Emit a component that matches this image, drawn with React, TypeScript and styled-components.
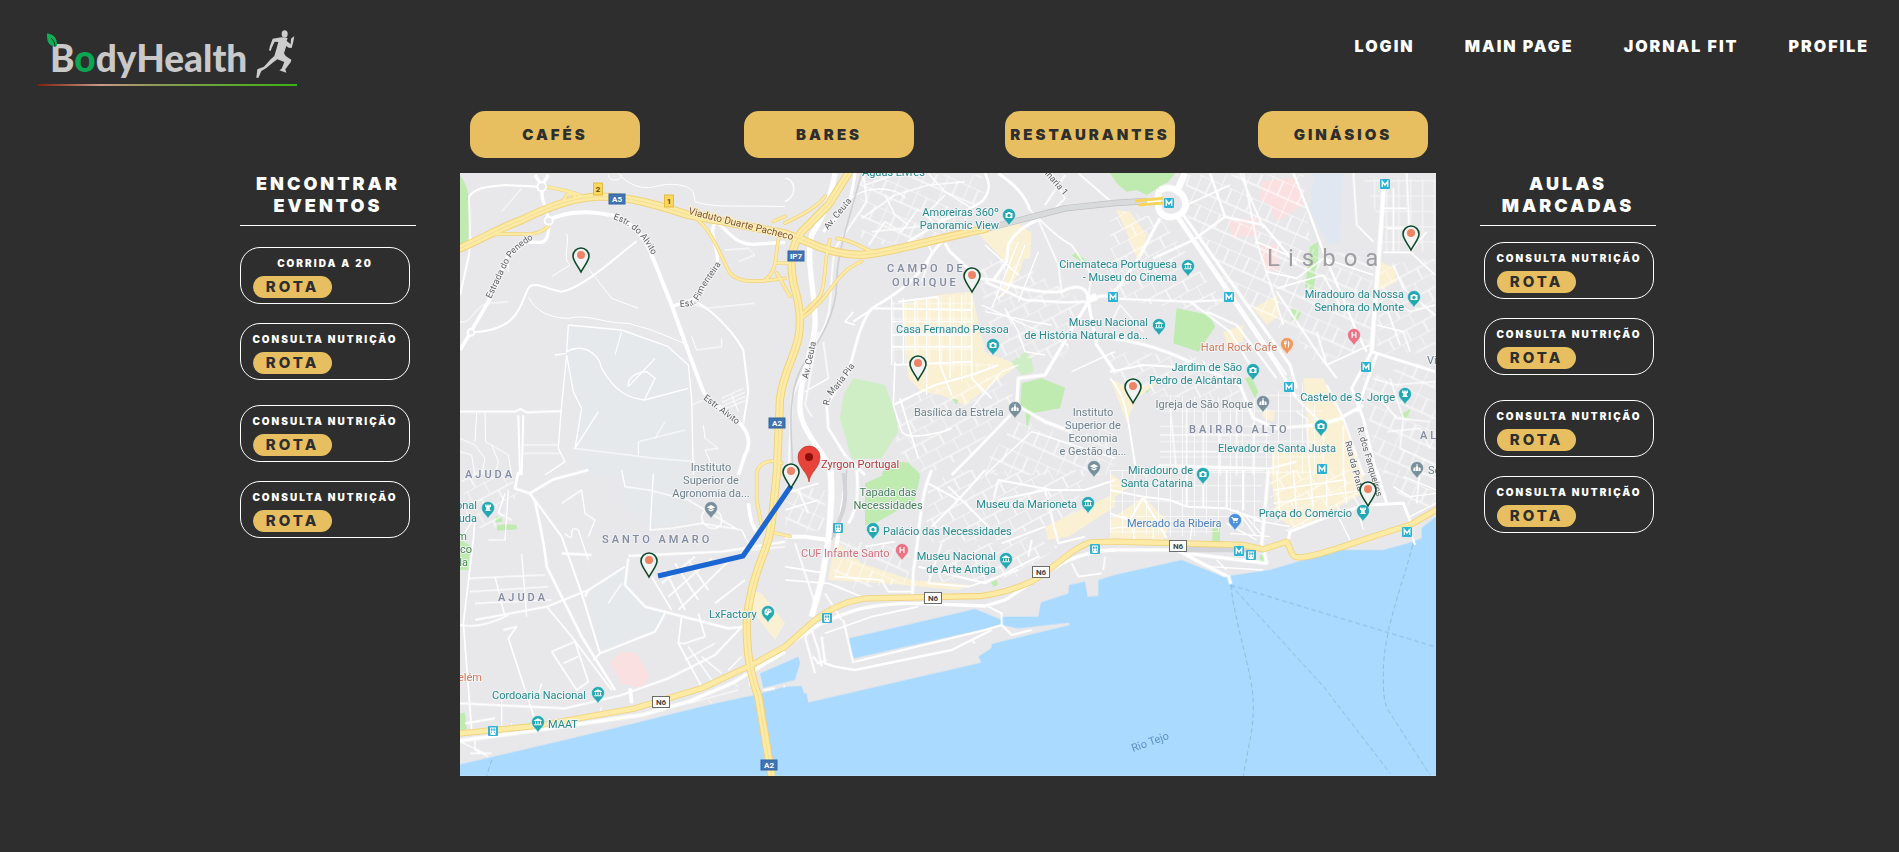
import React from "react";
import styled, { createGlobalStyle } from "styled-components";

const GlobalStyle = createGlobalStyle`
  * { box-sizing: border-box; }
  body {
    margin: 0;
    background: #2e2e2e;
    color: #fff;
    font-family: Inter, "Open Sans", sans-serif;
  }
`;

const Page = styled.div`
  padding-bottom: 48px;
`;

const Header = styled.header`
  display: flex;
  justify-content: space-between;
  align-items: flex-start;
  padding: 28px 30px 0 36px;
  height: 111px;
`;

const LogoLink = styled.a`
  display: block;
  line-height: 0;
`;

const Nav = styled.nav`
  display: flex;
  gap: 50px;
  padding-top: 8px;
`;

const NavLink = styled.a`
  color: #fff;
  font-size: 16px;
  line-height: 20px;
  font-weight: 900;
  letter-spacing: 2px;
  text-decoration: none;
  white-space: nowrap;
`;

const Main = styled.main`
  display: grid;
  grid-template-columns: 176px minmax(0, 1fr) 176px;
  column-gap: 44px;
  padding: 0 243px 0 240px;
`;

const Side = styled.aside`
  padding-top: 62px;
`;

const SideTitle = styled.h2`
  margin: 0;
  padding: 0 8px 8px;
  border-bottom: 1px solid #fff;
  font-size: 18px;
  line-height: 22px;
  font-weight: 900;
  letter-spacing: 3px;
  text-align: center;
`;

const Groups = styled.div<{ $top: number; $left: number }>`
  display: flex;
  flex-direction: column;
  gap: 25px;
  padding-top: ${(p) => p.$top}px;
  padding-left: ${(p) => p.$left}px;
`;

const Group = styled.div`
  display: flex;
  flex-direction: column;
  gap: 19px;
`;

const Card = styled.article`
  width: 170px;
  height: 57px;
  padding-top: 8px;
  border: 1px solid #fff;
  border-radius: 20px;
`;

const CardTitle = styled.h3`
  margin: 0 0 6px;
  font-size: 10px;
  line-height: 14px;
  font-weight: 900;
  letter-spacing: 2px;
  text-align: center;
  white-space: nowrap;
`;

const RouteButton = styled.button`
  display: block;
  width: 79px;
  height: 22px;
  margin-left: 12px;
  padding: 0;
  border: 0;
  border-radius: 11px;
  background: #e7bf61;
  color: #2e2e2e;
  font: 800 15px/22px Inter, sans-serif;
  letter-spacing: 3px;
  cursor: pointer;
`;

const Filters = styled.div`
  display: grid;
  grid-template-columns: 274fr 261fr 253fr 170fr;
  padding: 0 8px 0 10px;
  margin-bottom: 15px;
`;

const FilterButton = styled.button`
  width: 170px;
  height: 47px;
  padding: 0;
  border: 0;
  border-radius: 15px;
  background: #e7bf61;
  color: #2e2e2e;
  font: 900 15px/20px Inter, sans-serif;
  letter-spacing: 3px;
  cursor: pointer;
`;

const MapSvg = styled.svg`
  display: block;
  width: 100%;
  height: auto;
  font-family: Roboto, sans-serif;
`;

/* ---------- map geometry: each sheet is drawn at three units per pixel ---------- */

const sheets: Record<string, string> = {
  nw: "translate(-15 -24)",
  n: "translate(975 -24)",
  ne: "translate(1950 -24)",
  sw: "translate(-15 891)",
  s: "translate(975 891)",
  se: "translate(1950 891)",
};

type Area = [string, string, string];
const GREEN = "#bfeab0";
const PALE = "#cfeec6";
const BUFF = "#faf0d4";
const PINK = "#fbe0e2";
const MIST = "#e5e9ec";

const areas: Area[] = [
  ["nw", MIST, "M340 480L520 500L650 550L700 600V900L600 930H400L355 850L380 740L335 600Z"],
  ["sw", MIST, "M500 0H700V150L590 170L500 100ZM500 290L560 400L630 430L600 480L440 545L400 380Z"],
  ["nw", GREEN, "M15 30C30 50 42 80 42 110L40 232L15 240Z"],
  ["n", BUFF, "M575 200L680 160L740 205L735 280L660 290ZM690 215L735 230L700 330L650 400L660 340Z"],
  ["n", BUFF, "M352 420L460 390L560 380L600 560L700 600L540 720L470 690L410 680L370 640Z"],
  ["n", PALE, "M205 640L300 660L330 740L340 800L290 880L200 882L165 760L175 690Z"],
  ["n", PALE, "M680 590L720 560L740 580L745 620L710 632Z"],
  ["n", GREEN, "M710 655L770 640L840 668L825 730L740 745L725 790L722 740L706 715Z"],
  ["n", GREEN, "M860 272L875 260L905 290L890 292ZM500 700L520 705L515 720Z"],
  ["n", GREEN, "M300 905L345 890L370 893L408 930H290Z"],
  ["s", GREEN, "M330 0H395L405 20L390 90L340 120L270 160L240 165L240 40Z"],
  ["s", BUFF, "M150 210L230 280L380 330L560 345L520 360L300 340L130 330ZM780 170L990 70V110L850 200L790 210Z"],
  ["s", GREEN, "M618 335L635 330L640 345L625 350Z"],
  ["ne", GREEN, "M0 24H195L175 50L110 90L80 75L50 80L20 55Z"],
  ["ne", BUFF, "M18 135L60 140L110 210L100 270L80 280L45 190Z"],
  ["ne", PINK, "M455 50L560 35L580 120L500 170L480 120L450 105ZM358 170L440 155L445 210L365 218ZM455 240L500 240L505 320L460 310Z"],
  ["ne", "#e1e7f0", "M610 24H700L690 230L660 240L600 140Z"],
  ["ne", GREEN, "M600 245L625 230V280L610 375L585 368Z"],
  ["ne", GREEN, "M200 430L300 450L315 485L265 560L190 535Z"],
  ["ne", GREEN, "M365 515L385 500L400 515L385 532ZM545 430L575 440L560 470L545 465Z"],
  ["ne", GREEN, "M405 640L425 635L445 680L435 700ZM100 670L125 665L110 685ZM870 750L905 730L895 760Z"],
  ["ne", BUFF, "M430 430L500 390L510 450L470 480ZM340 500L400 480L400 530L350 540ZM810 290L855 310L860 350L800 380Z"],
  ["ne", BUFF, "M580 640L640 640L690 740L760 930H480L490 850L600 860Z"],
  ["ne", BUFF, "M0 640L60 670L140 655L80 700L50 770ZM450 730L495 740L490 770L460 760Z"],
  ["se", BUFF, "M0 150L100 80L180 160L160 210L0 205ZM480 0H760V70L560 180L500 140ZM0 10L60 50L0 90Z"],
  ["se", GREEN, "M307 175H330V215H307ZM450 255H465V275H450Z"],
  ["sw", GREEN, "M122 140L140 138L142 155L122 158ZM122 167L150 163L185 165V178L128 182ZM15 210L45 225L40 300H15ZM15 730L30 728L35 780H15Z"],
  ["sw", PINK, "M465 580L500 545L545 550L585 620L560 655L500 640Z"],
  ["sw", BUFF, "M880 360L920 370L990 460L960 510L890 420Z"],
];

type GridArea = [string, string, string];
const gridAreas: GridArea[] = [
  ["n", "square", "M320 410L560 380L565 590L640 600L560 640L460 600L320 590Z"],
  ["n", "slant", "M580 290L680 280L900 410L840 580L650 580L600 440Z"],
  ["n", "steep", "M220 30L590 30L600 100L480 230L230 240Z"],
  ["n", "slant", "M350 700L640 620L690 700L560 870L420 930L330 850Z"],
  ["n", "steep", "M610 880L700 760L880 820L990 760V930H600Z"],
  ["ne", "steep", "M230 30L580 30L600 240L520 500L360 380L220 130Z"],
  ["ne", "slant", "M0 130L150 160L340 410L290 440L0 400Z"],
  ["ne", "square", "M760 40L975 40V260L820 265L810 180Z"],
  ["ne", "steep", "M600 250L790 280L780 550L620 600L520 470Z"],
  ["ne", "slant", "M810 300L975 280V560L800 570Z"],
  ["ne", "square", "M150 690L440 700L590 650L650 760L630 930L150 930Z"],
  ["ne", "slant", "M0 560L240 570L400 640L380 710L100 690L0 620Z"],
  ["ne", "steep", "M760 640L975 580V930H800Z"],
  ["se", "square", "M0 0H460L450 160L250 200L0 190Z"],
  ["se", "slant", "M480 0H800L830 95L680 130L540 190L480 160Z"],
  ["se", "steep", "M820 0H978V100L920 120L880 100Z"],
  ["s", "slant", "M430 40L520 0H900L870 130L650 210L420 220Z"],
  ["s", "steep", "M0 40L120 60L120 180L0 190ZM140 210L380 230L370 340L150 360Z"],
  ["s", "slant", "M430 250L730 200L820 230L700 320L430 340Z"],
  ["sw", "slant", "M15 0H160L190 70L120 180L40 170Z"],
];

type Road = [string, number, string];
const roads: Road[] = [
  /* north-west */
  ["nw", 10, "M240 30L260 62L280 30M260 62L262 100L282 165C282 215 275 235 250 232H205"],
  ["nw", 6, "M260 65L150 60C90 65 60 70 42 95L46 220L42 270L15 390"],
  ["nw", 12, "M280 165C330 140 400 135 475 152C540 175 570 220 590 270L650 420L700 560L745 680"],
  ["nw", 11, "M210 235L160 270L100 410L48 500L15 555"],
  ["nw", 6, "M545 228C480 280 380 370 320 380C280 375 235 345 220 370C190 430 190 495 48 502"],
  ["nw", 10, "M780 175C760 200 790 240 788 300L725 400L650 425"],
  ["nw", 10, "M785 170C820 200 840 235 890 238L990 232"],
  ["nw", 6, "M728 412C790 450 840 510 865 555L880 680L865 775"],
  ["nw", 11, "M745 680L760 700L850 770C880 800 890 835 870 870L850 930"],
  ["nw", 3, "M490 25C520 60 560 75 600 65C650 50 700 60 715 80L720 110C780 130 850 120 990 125"],
  ["nw", 3, "M335 205C345 240 320 280 345 300L290 335M400 310L470 400L550 430"],
  ["nw", 3, "M220 395C240 440 290 460 340 460C400 445 440 475 520 475L590 495L700 540"],
  ["nw", 4, "M340 480L500 495L640 545L700 600L710 700L715 930M340 480L335 560C380 535 430 560 440 610C480 680 520 700 568 705M520 665L600 580M520 665C515 640 545 620 575 620L600 640L568 705L700 670"],
  ["nw", 4, "M335 565L300 570M335 570L355 680L380 730L360 850L430 740M335 570L318 740L310 850L330 890L270 930"],
  ["nw", 6, "M15 740H180L197 732L215 742L320 738M190 750L195 930M205 750L200 930"],
  ["nw", 3, "M65 740L60 830M90 740L92 830L160 870L170 930M200 840H310M205 865H320M355 850L440 860L600 880L720 890M550 870V830L690 795M600 820L630 770M710 720L745 705"],
  ["nw", 3, "M745 780L750 820L790 850L750 855L770 900M710 515L725 555L800 545V520M15 470C50 480 60 420 100 415L160 410M160 270V320M500 500L480 570"],
  ["nw", 3, "M800 700L865 670M800 712L870 682M800 724L872 694M800 736L872 706M830 690L850 740"],
  ["nw", 3, "M15 820L60 840L90 880L80 930M15 860L50 870L60 930M110 840L130 890L120 930"],
  ["nw", 3, "M700 410L750 430L900 415M200 70L140 140M460 30C460 50 500 50 500 30M810 255L880 250L900 270L850 290"],
  /* north */
  ["n", 16, "M150 25C140 80 120 150 80 210C60 290 95 400 90 480C85 560 40 640 45 740C60 820 130 870 140 930"],
  ["n", 9, "M210 25C205 60 200 90 190 120L115 200"],
  ["n", 5, "M235 25L245 110L150 250C130 350 150 430 110 500C90 550 60 600 20 700L10 930"],
  ["n", 8, "M470 232C420 270 440 330 260 430C220 480 210 560 190 620L125 720L130 790L180 870L240 930"],
  ["n", 8, "M600 25C620 60 610 90 590 110L540 140L475 165L370 230"],
  ["n", 9, "M640 25C690 60 720 90 735 135M480 235L495 260L580 340L625 345L665 290L670 240C690 200 720 180 760 165"],
  ["n", 9, "M625 345C700 370 760 385 830 380C870 360 900 360 910 395"],
  ["n", 7, "M600 350L720 405L840 412L905 410"],
  ["n", 22, "M905 405L935 395"],
  ["n", 10, "M910 410L850 510L780 630L700 640L695 720L780 770L860 800M910 410L935 540L990 620M935 395L990 390"],
  ["n", 8, "M700 725L560 870L500 930"],
  ["n", 6, "M325 720L450 660L560 630L640 600M325 600L560 590M320 545H560M205 470L265 430L560 435M340 410L460 395"],
  ["n", 5, "M330 590L325 720L350 800C370 830 480 800 500 790M205 440L180 470L210 480M345 700L400 880"],
  ["n", 5, "M560 380V640L620 700M460 395L465 600L500 690M430 240L440 260L410 350"],
  ["n", 4, "M320 400V600M355 400V600M390 400V640M425 400V690M495 395V640M530 390V650M320 470H560M320 510H560"],
  ["n", 4, "M600 240L700 330M640 400L670 370L720 240M620 430L700 230M700 410L760 260M600 440L740 470L800 480M590 420L850 540M660 430L700 500L720 560L780 570"],
  ["n", 4, "M250 240L300 170L350 200L400 130M230 160L330 90L430 60L540 50M300 90L330 150L370 180M240 60L340 25M430 25L480 80L560 130M260 200L440 180M480 90L420 150L480 200"],
  ["n", 5, "M735 135C780 180 820 220 860 240L920 330L910 395M760 165L820 300L830 380M840 30L780 120M880 25L990 120M800 25L840 100L800 140"],
  ["n", 4, "M180 120C220 60 330 60 360 100M0 40C30 40 40 90 0 110M100 500L60 720L80 755M115 530L130 640L60 680M600 930L740 800L990 880M860 620L990 560M700 600L650 620L560 730"],
  /* north-east */
  ["ne", 20, "M150 75C190 55 235 90 225 130C210 165 150 165 145 125C140 100 145 85 150 75M205 70L225 24"],
  ["ne", 9, "M0 110L145 110M150 160L80 290L0 400"],
  ["ne", 9, "M220 150L540 600L560 670M200 155L500 600L560 700"],
  ["ne", 5, "M205 150L530 630"],
  ["ne", 13, "M820 70C815 200 800 330 785 560"],
  ["ne", 9, "M785 560L725 670L760 760L800 930M800 570L760 680L740 740M785 560L975 620"],
  ["ne", 7, "M345 155L250 225L130 280M345 155L300 24M345 155L460 180L560 300M550 24L600 150L640 260L740 500L770 560"],
  ["ne", 9, "M0 520C100 530 200 570 260 600L390 660L430 760L500 790L620 780L690 760L760 720"],
  ["ne", 6, "M0 400L240 410L340 405M240 410L360 500L420 600M290 440L380 480L500 640M500 380L620 560L680 640"],
  ["ne", 6, "M0 640C40 680 50 740 60 800L80 930M0 620L100 600L260 610"],
  ["ne", 5, "M850 70V260M820 130H890M830 190H900M820 262H900M890 24L900 260L975 330M730 24L740 180L790 230M815 380L900 440L975 420M850 300L880 370L975 450M800 480L880 500L900 560M830 430L870 540M900 260L950 200"],
  ["ne", 5, "M400 24L440 230L520 480M440 230L600 300M230 120L360 60M390 24L460 190M470 320L560 340L640 280L790 330M500 370L640 330L700 440L780 420M620 500L650 600L780 540"],
  ["ne", 4, "M490 840V930M430 770V930M380 720V930M330 740V930M280 740V930M230 730V930M180 720L200 930M150 810H480M150 860H480M150 910H480M560 740L590 760L600 930M640 800V930M700 780V930"],
  ["ne", 6, "M560 700L640 780L700 760M650 660L700 760L760 930M100 930L150 900L480 910L560 890"],
  ["ne", 4, "M810 700L860 760L960 770M840 640L880 760L870 850L975 900M830 800L930 790L960 850M790 640L850 660L975 650M0 480L30 420L100 500"],
  /* south-west */
  ["sw", 8, "M190 5L180 55L225 70L240 95C250 140 270 230 275 290L380 500L480 660M225 70L295 28L400 0"],
  ["sw", 6, "M225 70L320 200L380 370L435 550M510 290L400 360L275 410L60 450M435 550L600 485L630 430M415 570L435 550"],
  ["sw", 7, "M520 265L510 345L570 410L820 475L870 470M400 360L390 380M320 250L410 255M520 258L800 245L990 215"],
  ["sw", 6, "M30 760L120 745M15 700L330 715L500 675L640 625L780 555L870 460L870 420"],
  ["sw", 5, "M15 465C60 475 110 460 160 435M15 210L60 140L55 210L25 460L50 780M145 480L185 470L160 505L240 750M275 410L350 500L470 660M290 545L360 515L400 635L365 660L290 545M325 580L370 560"],
  ["sw", 4, "M40 325L270 315M45 365L280 350M60 400L290 390M120 320L150 440M200 250L215 440M100 210H150L160 60M330 190C370 230 330 160 370 180L400 270M380 60L390 130L420 150L400 200M320 100L380 60M150 70L130 130L170 150"],
  ["sw", 4, "M595 10L585 180L650 175L740 160L860 180M740 140C740 110 800 110 800 150C800 190 740 180 740 140M500 0L510 50L580 60L700 90L850 180M460 400L500 340"],
  ["sw", 5, "M590 320L650 420M630 300L690 420M660 280L730 390M700 270L760 360M620 340L720 260M640 380L770 265M670 420L830 265M680 440L670 520L690 520L750 500L730 430M670 520L740 650M780 400L870 330"],
  ["sw", 4, "M700 530L770 630M740 560L800 610M690 570L780 520M860 180L890 240L990 230M860 560L820 600M60 800L60 840L100 860M15 815L90 850M45 850H110M140 690V770M245 690L260 640"],
  ["sw", 11, "M880 100C885 140 890 170 910 190M525 655L530 700"],
  ["sw", 11, "M15 812L250 780L560 735L700 695L830 640L990 545"],
  ["sw", 6, "M925 660L960 655M985 650L990 648"],
  ["sw", 3, "M700 700L850 660M850 650L835 640M170 780V760M430 740L440 710M760 690L770 700M880 620L885 650"],
  /* south */
  ["s", 18, "M135 0C145 60 135 140 130 210L110 330L80 440"],
  ["s", 12, "M0 200H60L130 210M180 60L160 190L150 260"],
  ["s", 9, "M215 0C220 60 220 110 190 160M440 0C400 90 405 200 385 300L382 380"],
  ["s", 10, "M0 530L100 465C180 430 230 400 400 400L600 408L660 390C760 330 850 240 990 240"],
  ["s", 6, "M650 465V430L610 410M600 480L650 465L680 495L740 480M210 575L600 480M175 450L205 580M80 480L100 540L110 590M80 480L60 500L90 610"],
  ["s", 7, "M85 560L100 580L125 570M110 500L120 580L150 590L210 600L500 540L620 480"],
  ["s", 5, "M0 330L130 340L230 380M0 290L120 310M30 220L90 400M0 70L100 40M40 60L70 130M0 120L100 90M150 320L290 330L310 365H380M240 230L330 215M470 220L430 340L550 350L700 300"],
  ["s", 6, "M430 40L520 90L600 0M520 90L440 170M490 50L640 200M640 90L780 60L900 60L990 30M780 60L820 220L900 200M650 220L780 170M620 110L640 30L800 60M400 290L600 340L760 260M740 210L730 260"],
  ["s", 5, "M860 280L880 320L950 310M960 260L955 300M120 490L260 440L400 410M560 510L570 520M120 370L170 450"],
  /* south-east */
  ["se", 10, "M475 0L465 120L455 220L470 280L230 250M0 240H200L350 318M355 315L362 342"],
  ["se", 9, "M535 210L540 185L680 130L770 105L880 100L905 165M800 0L830 100"],
  ["se", 6, "M905 195L915 225M100 80L180 90L230 110L350 115L450 150M0 60L100 80L60 150L0 130M100 85L170 205M230 0V110M280 0V110M350 0V115M400 0V120"],
  ["se", 4, "M380 120L440 200M400 130L460 200M430 150L540 170M350 160L440 210M360 190L480 200M500 0L510 140M550 0L560 130M600 0L610 120M650 0V110M700 0L710 100M490 60L700 30M490 100L760 60M480 140L560 120"],
  ["se", 4, "M60 150L75 210M130 150V205M0 175L60 170M250 150L240 210M250 270L300 290L460 300M320 270L350 300M880 20L978 60M850 50L900 80L978 70M930 0L920 100M680 130L720 210M740 110L760 180M900 140L978 100"],
];

const NORTH_SOUTH =
  "M1165 1L1105 96L1025 176C995 220 988 260 1000 330C1020 400 1025 440 1015 496C1000 560 970 600 960 676L950 906L940 1000C935 1060 930 1090 915 1131C880 1220 865 1280 860 1350C860 1440 870 1500 895 1571L935 1809";
const WEST_EAST =
  "M0 226C60 200 120 165 185 141C260 105 330 75 415 71C510 70 590 95 685 126L975 181L1035 204C1090 230 1140 246 1205 246C1290 240 1390 205 1575 168";
const COAST =
  "M0 1681L225 1659L525 1606L725 1546L875 1476L975 1421L1065 1341C1120 1300 1170 1280 1225 1276L1565 1269C1620 1262 1660 1250 1715 1226C1790 1180 1840 1120 1895 1108L1965 1106L2350 1116L2410 1129L2480 1106C2500 1140 2490 1156 2525 1153C2580 1150 2700 1100 2850 1056L2928 1011";
const RAMPS =
  "M260 42C310 50 350 60 370 72M100 185C180 175 220 200 265 160M310 85C320 60 330 55 345 70M700 130C760 170 790 270 810 300C840 335 900 325 975 316M960 180C940 250 960 290 910 325M975 130L940 145M975 150C1060 110 1080 90 1095 70M1110 200C1090 260 1100 330 1080 370L1020 430M1130 196C1180 200 1210 230 1250 240M1205 265C1120 300 1120 370 1020 440M945 1080L990 1090M905 1060L890 980V900C900 860 940 860 965 870M950 300L990 370M950 270H990";

/* ---------- labels, in map pixels ---------- */

const TEAL = "#258a8e";
const SLATE = "#6f808b";
const ROAD = "#5f6265";

type Label = [number, number, string, string, ("start" | "middle" | "end")?];
const labels: Label[] = [
  [402, 3, "Águas Livres", TEAL],
  [539, 43, "Amoreiras 360º", TEAL, "end"],
  [539, 56, "Panoramic View", TEAL, "end"],
  [717, 95, "Cinemateca Portuguesa", TEAL, "end"],
  [717, 108, "- Museu do Cinema", TEAL, "end"],
  [688, 153, "Museu Nacional", TEAL, "end"],
  [688, 166, "de História Natural e da...", TEAL, "end"],
  [436, 160, "Casa Fernando Pessoa", TEAL],
  [944, 125, "Miradouro da Nossa", TEAL, "end"],
  [944, 138, "Senhora do Monte", TEAL, "end"],
  [817, 178, "Hard Rock Cafe", "#d1795c", "end"],
  [782, 198, "Jardim de São", TEAL, "end"],
  [782, 211, "Pedro de Alcântara", TEAL, "end"],
  [793, 235, "Igreja de São Roque", SLATE, "end"],
  [758, 279, "Elevador de Santa Justa", TEAL],
  [935, 228, "Castelo de S. Jorge", TEAL, "end"],
  [733, 301, "Miradouro de", TEAL, "end"],
  [733, 314, "Santa Catarina", TEAL, "end"],
  [454, 243, "Basílica da Estrela", SLATE],
  [633, 243, "Instituto", SLATE, "middle"],
  [633, 256, "Superior de", SLATE, "middle"],
  [633, 269, "Economia", SLATE, "middle"],
  [633, 282, "e Gestão da...", SLATE, "middle"],
  [617, 335, "Museu da Marioneta", TEAL, "end"],
  [423, 362, "Palácio das Necessidades", TEAL],
  [428, 323, "Tapada das", "#47805c", "middle"],
  [428, 336, "Necessidades", "#47805c", "middle"],
  [341, 384, "CUF Infante Santo", "#d5707c"],
  [536, 387, "Museu Nacional", TEAL, "end"],
  [536, 400, "de Arte Antiga", TEAL, "end"],
  [667, 354, "Mercado da Ribeira", "#4c7fbe"],
  [892, 344, "Praça do Comércio", TEAL, "end"],
  [251, 298, "Instituto", SLATE, "middle"],
  [251, 311, "Superior de", SLATE, "middle"],
  [251, 324, "Agronomia da...", SLATE, "middle"],
  [17, 336, "Nacional", TEAL, "end"],
  [17, 349, "da Ajuda", TEAL, "end"],
  [7, 367, "Jardim", "#3f8a4c", "end"],
  [12, 380, "Botânico", "#3f8a4c", "end"],
  [8, 393, "da Ajuda", "#3f8a4c", "end"],
  [22, 508, "Belém", "#d1795c", "end"],
  [249, 445, "LxFactory", TEAL],
  [32, 526, "Cordoaria Nacional", TEAL],
  [88, 555, "MAAT", TEAL],
  [361, 295, "Zyrgon Portugal", "#b8383a"],
  [967, 191, "Vila", SLATE],
  [968, 301, "Sé de", SLATE],
];

type District = [number, number, string];
const districts: District[] = [
  [427, 99, "CAMPO DE"],
  [432, 113, "OURIQUE"],
  [729, 260, "BAIRRO ALTO"],
  [142, 370, "SANTO AMARO"],
  [5, 305, "AJUDA"],
  [38, 428, "AJUDA"],
  [960, 266, "ALFAMA"],
];

type Street = [string, string, string];
const streets: Street[] = [
  ["st1", "M31 126L48 90Q54 76 80 62", "Estrada do Penedo"],
  ["st2", "M153 46Q184 56 196 92", "Estr. do Alvito"],
  ["st3", "M220 134L232 133Q240 128 244 116L266 84", "Estr. Pimenteira"],
  ["st4", "M243 226L284 257", "Estr. Alvito"],
  ["st5", "M368 57L400 18", "Av. Ceuta"],
  ["st6", "M348 206L358 160", "Av. Ceuta"],
  ["st7", "M369 233Q370 222 378 216L400 186", "R. Maria Pia"],
  ["st8", "M575 -10L612 32", "Artilharia 1"],
  ["st9", "M897 255L921 339", "R. dos Fanqueiros"],
  ["st10", "M885 269L901 330", "Rua da Prata"],
];

type Poi = [number, number, string, string];
const pois: Poi[] = [
  [549, 43, "camera", "#22a9b3"],
  [728, 94, "museum", "#22a9b3"],
  [699, 153, "museum", "#22a9b3"],
  [954, 125, "camera", "#22a9b3"],
  [533, 173, "camera", "#22a9b3"],
  [894, 163, "health", "#ee7285"],
  [827, 172, "food", "#f3985b"],
  [793, 198, "camera", "#22a9b3"],
  [803, 230, "church", "#78909c"],
  [945, 222, "tower", "#22a9b3"],
  [861, 254, "camera", "#22a9b3"],
  [555, 236, "church", "#78909c"],
  [634, 295, "school", "#78909c"],
  [743, 302, "camera", "#22a9b3"],
  [957, 296, "church", "#78909c"],
  [628, 331, "museum", "#22a9b3"],
  [413, 357, "camera", "#22a9b3"],
  [442, 378, "health", "#ee7285"],
  [546, 387, "museum", "#22a9b3"],
  [775, 348, "cart", "#4d8fe0"],
  [903, 339, "tower", "#22a9b3"],
  [28, 336, "tower", "#22a9b3"],
  [251, 336, "school", "#78909c"],
  [308, 440, "palette", "#22a9b3"],
  [138, 521, "museum", "#22a9b3"],
  [78, 550, "museum", "#22a9b3"],
];

const glyphs: Record<string, React.ReactNode> = {
  camera: <path fillRule="evenodd" d="M-3.500-2H-2L-1-3H1L2-2H3.500V3H-3.500ZM0-1.200A1.700 1.700 0 1 0 .01-1.200Z" />,
  museum: <path d="M0-3.800L3.800-1.800V-1H-3.800V-1.800ZM-3-.6H-2V2H-3ZM-.5-.6H.5V2H-.5ZM2-.6H3V2H2ZM-3.800 2.300H3.800V3.300H-3.800Z" />,
  health: <path d="M-2.500-3H-1.300V-.6H1.300V-3H2.500V3H1.300V.6H-1.300V3H-2.500Z" />,
  food: <path d="M-3-3.200H-2.400V-1H-2V-3.200H-1.500V-1H-1V-3.200H-.4V0L-1.200.8V3.400H-2.100V.8L-3 0ZM1-3.200Q2.800-2.600 2.600.6H2V3.400H1Z" />,
  church: <path d="M-.5-4H.5V-2L1.500-.6V3H-1.500V-.6L-.5-2ZM-3.600 0L-2-.8V3H-3.600ZM2-.8L3.600 0V3H2Z" />,
  tower: <path d="M-3-3.500H-1.500V-2.500H-.6V-3.500H.6V-2.500H1.500V-3.500H3V-1.300L1.700-.5V1.200L3 3H-3L-1.700 1.200V-.5L-3-1.300Z" />,
  school: <path d="M0-3L4.200-.8L0 1.300L-4.200-.8ZM-2.500.8L0 2L2.500.8V2.300L0 3.500L-2.500 2.300Z" />,
  cart: <path d="M-3.800-3H-2.300L-1.800-2H3.500L2.200 1H-1.600L-3-2.200H-3.800ZM-1.800 1.700H-.5V3H-1.800ZM1.200 1.700H2.500V3H1.200Z" />,
  palette: <path fillRule="evenodd" d="M0-3.600A3.600 3.600 0 1 0 0 3.600Q1-.1 3.600.5A3.600 3.600 0 0 0 0-3.600ZM-2.500-.6H-1.200V.7H-2.500ZM-1-2.500H.3V-1.200H-1ZM1.200-1.800H2.300V-.7H1.200Z" />,
};

type Shield = [number, number, string, "blue" | "yellow" | "white"];
const shields: Shield[] = [
  [157, 26, "A5", "blue"],
  [317, 250, "A2", "blue"],
  [309, 592, "A2", "blue"],
  [336, 83, "IP7", "blue"],
  [138, 16, "2", "yellow"],
  [209, 28, "1", "yellow"],
  [201, 529, "N6", "white"],
  [473, 425, "N6", "white"],
  [581, 399, "N6", "white"],
  [718, 373, "N6", "white"],
];
const shieldStyle = {
  blue: { fill: "#4174b4", stroke: "#35649f", text: "#fff", w: 16, h: 10 },
  yellow: { fill: "#fbd75c", stroke: "#e3bb45", text: "#5c4a1c", w: 9, h: 12 },
  white: { fill: "#fff", stroke: "#6c6c6c", text: "#444", w: 17, h: 11 },
};

const metro = [[709, 30], [925, 11], [769, 124], [653, 124], [829, 214], [906, 194], [862, 296], [779, 378], [947, 359]];
const trains = [[791, 382], [635, 376], [378, 355], [367, 445], [33, 558]];
const eventPins = [[121, 100], [512, 120], [458, 208], [951, 78], [673, 231], [189, 405], [331, 316], [908, 334]];

function CityMap() {
  return (
    <MapSvg viewBox="0 0 976 603" role="img" aria-label="Mapa de Lisboa">
      <defs>
        <pattern id="square" width="36" height="46" patternUnits="userSpaceOnUse">
          <path d="M0 0H36M0 0V46" stroke="#fff" strokeWidth="6" />
        </pattern>
        <pattern id="slant" width="58" height="74" patternUnits="userSpaceOnUse" patternTransform="rotate(-28)">
          <path d="M0 0H58M0 0V40M29 40V74M0 40H58" stroke="#fff" strokeWidth="5" fill="none" />
        </pattern>
        <pattern id="steep" width="66" height="84" patternUnits="userSpaceOnUse" patternTransform="rotate(24)">
          <path d="M0 0H66M0 0V84M0 46H66M33 0V46" stroke="#fff" strokeWidth="5" fill="none" />
        </pattern>
      </defs>
      <svg width="976" height="603" viewBox="0 0 2928 1809" fill="none" strokeLinejoin="round">
        <rect width="2928" height="1809" fill="#e8e8ea" />
        {areas.map(([s, fill, d], i) => (
          <path key={i} transform={sheets[s]} fill={fill} d={d} />
        ))}
        <g opacity="0.7">
          {gridAreas.map(([s, p, d], i) => (
            <path key={i} transform={sheets[s]} fill={`url(#${p})`} d={d} />
          ))}
        </g>
        <g fill="#aadaff">
          <path d="M0 1774L315 1701L515 1653L745 1596L885 1566L975 1541L1025 1539L1032 1560L1040 1562L1045 1588L1563 1469L1556 1450L1595 1425V1413L1830 1356L1825 1349L1675 1366L1625 1356V1331H1735L1743 1288L1825 1261L1827 1236L1875 1226L1883 1271L1915 1269V1221L1965 1206L2165 1161L2290 1211L2430 1191L2630 1131H2770L2860 1106L2885 1095V1065L2928 1031V1809H0Z" />
          <path d="M1165 1396L1545 1308L1625 1340V1356L1180 1456Z" />
          <path d="M900 1501L1015 1451L1020 1470L1005 1521L910 1545Z" />
        </g>
        <g stroke="#8abfe2" strokeWidth="3" strokeDasharray="14 9">
          <path d="M2312 1236C2330 1380 2380 1500 2380 1600C2380 1680 2360 1740 2350 1809" />
          <path d="M2312 1236L2590 1540L2790 1800M2312 1236L2928 1422" />
          <path d="M2858 1116C2830 1230 2770 1370 2770 1500C2770 1560 2770 1590 2790 1620L2910 1806M95 1760L80 1809" />
        </g>
        <g stroke="#fff">
          {roads.map(([s, w, d], i) => (
            <path key={i} transform={sheets[s]} strokeWidth={w} d={d} />
          ))}
        </g>
        <path d="M1575 168L1815 106L1965 90L2060 84" stroke="#bfc0c2" strokeWidth="19" />
        <path d="M1575 168L1815 106L1965 90L2060 84" stroke="#d9dadb" strokeWidth="15" />
        <path d="M1205 1C1170 130 1130 240 1130 330C1130 420 1080 500 1040 560C980 640 990 760 1000 900M1160 891C1155 980 1150 1030 1115 1100" stroke="#cfd0d2" strokeWidth="5" />
        <path d="M1150 900C1165 980 1150 1020 1120 1090M2160 1120H2350M2180 1132H2370" stroke="#d2d3d6" strokeWidth="12" />
        <path d="M2025 84L2110 76M2035 96L2110 90" stroke="#f8d45f" strokeWidth="9" />
        <g strokeLinecap="round">
          <g stroke="#f0d27c">
            <path d={RAMPS} strokeWidth="11" />
            <path d={COAST} strokeWidth="19" />
            <path d={WEST_EAST} strokeWidth="25" />
            <path d={NORTH_SOUTH} strokeWidth="25" />
          </g>
          <g stroke="#fdeaa4">
            <path d={RAMPS} strokeWidth="7" />
            <path d={COAST} strokeWidth="14" />
            <path d={WEST_EAST} strokeWidth="19" />
            <path d={NORTH_SOUTH} strokeWidth="19" />
          </g>
          <g stroke="#f2d88c" strokeWidth="2">
            <path d={WEST_EAST} />
            <path d={NORTH_SOUTH} />
          </g>
        </g>
        <g stroke="#fff" strokeWidth="6" fill="#e8e8ea">
          <circle cx="245" cy="41" r="13" />
          <circle cx="266" cy="143" r="12" />
          <circle cx="33" cy="478" r="10" />
        </g>
      </svg>

      {streets.map(([id, d, text]) => (
        <g key={id}>
          <path id={id} d={d} fill="none" />
          <text fontSize="9" fill={ROAD} stroke="#f4f4f5" strokeWidth="2" paintOrder="stroke">
            <textPath href={`#${id}`}>{text}</textPath>
          </text>
        </g>
      ))}
      <text transform="translate(228 41) rotate(14)" fontSize="10" fill="#7d5236" stroke="#fdf0c0" strokeWidth="2" paintOrder="stroke">
        Viaduto Duarte Pacheco
      </text>
      <text transform="translate(673 579) rotate(-20)" fontSize="11" fill="#6190c8">
        Rio Tejo
      </text>
      <text x="807" y="93" fontSize="24" letterSpacing="8" fill="#9d9da2">
        Lisboa
      </text>

      <g fontSize="11" fontWeight="500" letterSpacing="3" fill="#838ba0" stroke="#efeff1" strokeWidth="2" paintOrder="stroke">
        {districts.map(([x, y, t], i) => (
          <text key={i} x={x} y={y}>{t}</text>
        ))}
      </g>
      <g fontSize="11" stroke="#f3f4f5" strokeWidth="2" strokeLinejoin="round">
        {labels.map(([x, y, t, c, a], i) => (
          <text key={i} x={x} y={y} fill={c} textAnchor={a ?? "start"} paintOrder="stroke">{t}</text>
        ))}
      </g>

      {shields.map(([x, y, t, kind], i) => {
        const s = shieldStyle[kind];
        return (
          <g key={i} transform={`translate(${x} ${y})`}>
            <rect x={-s.w / 2} y={-s.h / 2} width={s.w} height={s.h} fill={s.fill} stroke={s.stroke} />
            <text y="3" fontSize="8" fontWeight="700" textAnchor="middle" fill={s.text}>{t}</text>
          </g>
        );
      })}
      {metro.map(([x, y], i) => (
        <g key={i} transform={`translate(${x} ${y})`}>
          <rect x="-5" y="-5" width="10" height="10" rx="1" fill="#2bb3d6" />
          <path d="M-2.700 3V-2.500L0 1L2.700-2.500V3" fill="none" stroke="#fff" strokeWidth="1.400" />
        </g>
      ))}
      {trains.map(([x, y], i) => (
        <g key={i} transform={`translate(${x} ${y})`}>
          <rect x="-5" y="-5" width="10" height="10" rx="1" fill="#35b1d3" />
          <path fillRule="evenodd" fill="#fff" d="M-3-3.500H3V2.300L2 3L3 4H-3L-2 3L-3 2.300ZM-2.200-2.500V-.2H-.4V-2.500ZM.4-2.500V-.2H2.200V-2.500ZM-2 .8V1.800H-1V.8ZM1 .8V1.800H2V.8Z" />
        </g>
      ))}
      {pois.map(([x, y, g, c], i) => (
        <g key={i} transform={`translate(${x} ${y})`}>
          <path d="M0 10C-1 6-6.500 4-6.500-1A6.500 6.500 0 0 1 6.500-1C6.500 4 1 6 0 10Z" fill={c} stroke="#f3f4f5" strokeWidth="0.600" />
          <g transform="translate(0 -1)" fill="#fff">{glyphs[g]}</g>
        </g>
      ))}

      <g transform="translate(349 309)">
        <path d="M0 0C-1-10-11-14-11-25A11 11 0 0 1 11-25C11-14 1-10 0 0Z" fill="#e8433b" stroke="#b9312a" strokeWidth="0.600" />
        <circle cy="-25" r="4" fill="#8c0d08" />
      </g>
      <path d="M198 403L283 383L331 313" fill="none" stroke="#1b66d0" strokeWidth="5" />
      {eventPins.map(([x, y], i) => (
        <g key={i} transform={`translate(${x} ${y})`}>
          <path d="M0-1C-3-7-8-12-8-17A8 8 0 0 1 8-17C8-12 3-7 0-1Z" fill="#f3f3f4" stroke="#0d4a2b" strokeWidth="1.600" />
          <circle cy="-18" r="4" fill="#ee8463" />
        </g>
      ))}
    </MapSvg>
  );
}

function Logo() {
  return (
    <svg width="262" height="62" viewBox="36 28 262 62" role="img" aria-label="BodyHealth">
      <defs>
        <linearGradient id="rule">
          <stop offset="0" stopColor="#82200f" />
          <stop offset="0.240" stopColor="#c9988a" />
          <stop offset="0.450" stopColor="#8f9a55" />
          <stop offset="1" stopColor="#39b312" />
        </linearGradient>
      </defs>
      <text x="50" y="72" fontFamily="Lato, sans-serif" fontWeight="900" fontSize="37" fill="#c9c9c9">
        B<tspan fill="#0ca551">o</tspan>dyHealth
      </text>
      <path d="M47 33.500C53 34 57.500 37.500 57 46L54 46.500C48 45 46.500 40 47 33.500Z" fill="#0fae56" />
      <path d="M51 38C54 41 55 43 55 47" fill="none" stroke="#2e2e2e" strokeWidth="1" />
      <g transform="translate(20 10) scale(.33333)" fill="#cdcdcd">
        <ellipse cx="794" cy="72" rx="9" ry="11" />
        <path d="M784 82L803 84L800 93L812 103L813 86L823 78L820 95L815 114L806 113L799 108L792 130L797 138L814 149L812 157L796 178L799 188L778 181L785 176L793 156L772 148L757 159L739 174L724 183L715 204L709 203L712 178L732 170L752 148L763 138L770 115L775 96L764 95L756 112L752 123L747 121L750 108L758 86Z" />
      </g>
      <rect x="38" y="84" width="259" height="2" fill="url(#rule)" />
    </svg>
  );
}

const filters = ["CAFÉS", "BARES", "RESTAURANTES", "GINÁSIOS"];
const events = [["CORRIDA A 20", "CONSULTA NUTRIÇÃO"], ["CONSULTA NUTRIÇÃO", "CONSULTA NUTRIÇÃO"]];
const classes = [["CONSULTA NUTRIÇÃO", "CONSULTA NUTRIÇÃO"], ["CONSULTA NUTRIÇÃO", "CONSULTA NUTRIÇÃO"]];

function CardList({ items, top, left }: { items: string[][]; top: number; left: number }) {
  return (
    <Groups $top={top} $left={left}>
      {items.map((group, g) => (
        <Group key={g}>
          {group.map((title, i) => (
            <Card key={i}>
              <CardTitle>{title}</CardTitle>
              <RouteButton type="button">ROTA</RouteButton>
            </Card>
          ))}
        </Group>
      ))}
    </Groups>
  );
}

export default function App() {
  return (
    <Page>
      <GlobalStyle />
      <Header>
        <LogoLink href="#home"><Logo /></LogoLink>
        <Nav>
          <NavLink href="#login">LOGIN</NavLink>
          <NavLink href="#main">MAIN PAGE</NavLink>
          <NavLink href="#jornal">JORNAL FIT</NavLink>
          <NavLink href="#profile">PROFILE</NavLink>
        </Nav>
      </Header>
      <Main>
        <Side>
          <SideTitle>ENCONTRAR EVENTOS</SideTitle>
          <CardList items={events} top={21} left={0} />
        </Side>
        <section>
          <Filters>
            {filters.map((f) => (
              <FilterButton key={f} type="button">{f}</FilterButton>
            ))}
          </Filters>
          <CityMap />
        </section>
        <Side>
          <SideTitle>AULAS MARCADAS</SideTitle>
          <CardList items={classes} top={16} left={4} />
        </Side>
      </Main>
    </Page>
  );
}
